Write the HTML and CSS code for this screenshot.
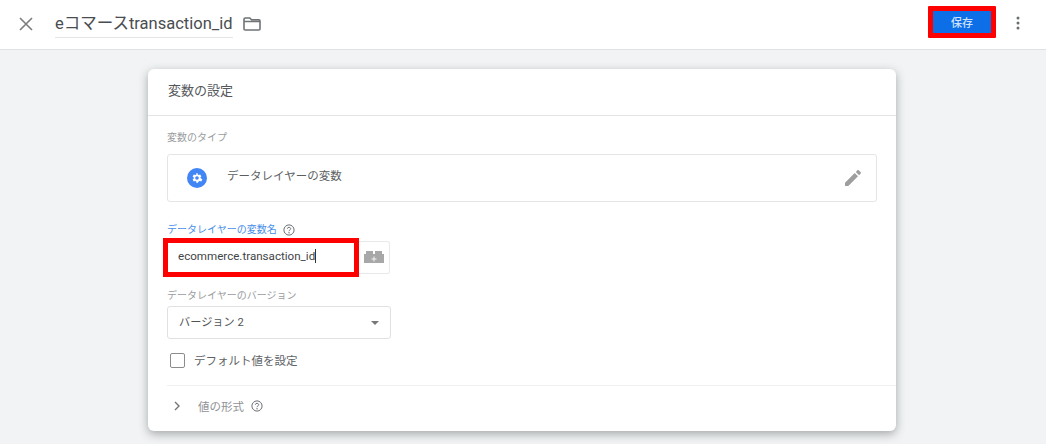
FILE: index.html
```html
<!DOCTYPE html>
<html lang="ja">
<head>
<meta charset="utf-8">
<title>eコマースtransaction_id</title>
<link rel="stylesheet" href="styles.css">
</head>
<body>
<header class="topbar">
  <svg class="close" viewBox="0 0 14 14" width="14" height="14"><path d="M1 1l12 12M13 1L1 13" stroke="#7a7d80" stroke-width="1.6" fill="none"/></svg>
  <div class="name">eコマースtransaction_id</div>
  <svg class="folder" viewBox="0 0 18 14" width="18" height="14"><path d="M1 2.200C1 1.500 1.500 1 2.200 1h4.600l1.700 1.800h7.300c.7 0 1.200.5 1.200 1.200v8c0 .7-.5 1-1.200 1H2.200C1.500 13 1 12.700 1 12z M1 4.500h16" stroke="#6f7376" stroke-width="1.600" fill="none"/></svg>
  <div class="spacer"></div>
  <div class="save-mark"><button class="save">保存</button></div>
  <svg class="more" viewBox="0 0 4 14" width="4" height="14"><circle cx="2" cy="2" r="1.500"/><circle cx="2" cy="7" r="1.500"/><circle cx="2" cy="12" r="1.500"/></svg>
</header>
<main class="stage">
  <section class="card">
    <h1 class="card-title">変数の設定</h1>
    <div class="card-body">
      <div class="label">変数のタイプ</div>
      <div class="type-box">
        <svg class="gear" viewBox="0 0 20 20" width="20" height="20">
          <circle cx="10" cy="10" r="10" fill="#4285f4"/>
          <path fill="#fff" fill-rule="evenodd" d="M14.200 10.600l1.200.9-1.200 2.100-1.400-.6c-.3.300-.7.500-1.100.6L10.500 15H9.500l-.2-1.400c-.4-.1-.8-.3-1.100-.6l-1.400.6-1.200-2.100 1.200-.9v-1.200l-1.200-.9 1.200-2.100 1.400.6c.3-.3.7-.5 1.100-.6L9.500 5h1l.2 1.400c.4.1.8.3 1.100.6l1.400-.6 1.200 2.100-1.200.9zM10 8.200a1.800 1.800 0 1 0 0 3.600 1.800 1.800 0 0 0 0-3.600z"/>
        </svg>
        <span class="type-name">データレイヤーの変数</span>
        <svg class="pencil" viewBox="0 0 16 16" width="16" height="16"><path fill="#9e9e9e" d="M0 12.700V16h3.300l9.700-9.800L9.700 3zM15.700 3.600c.4-.4.400-.9 0-1.300L13.700.3c-.4-.4-.9-.4-1.300 0l-1.600 1.600L14.100 5.200z"/></svg>
      </div>
      <div class="label label-blue">データレイヤーの変数名
        <svg class="help" viewBox="0 0 12 12" width="12" height="12"><circle cx="6" cy="6" r="5.100" fill="none" stroke="#6b6f72"/><path d="M4.300 4.700C4.400 3.800 5.100 3.300 6 3.300c1 0 1.700.6 1.700 1.400 0 1.200-1.700 1.200-1.700 2.500" fill="none" stroke="#6b6f72"/><circle cx="6" cy="8.800" r=".7" fill="#6b6f72"/></svg>
      </div>
      <div class="var-row">
        <div class="var-mark"><div class="var-input">ecommerce.transaction_id<span class="caret"></span></div></div>
        <div class="var-btn">
          <svg viewBox="0 0 20 12" width="20" height="12"><path fill="#a8a8a8" d="M0 3h2V0h7v3h2V0h7v3h2v9H0z"/><path stroke="#f4f4f4" stroke-width="1" d="M7.500 8h5M10 5.500v5"/></svg>
        </div>
      </div>
      <div class="label label-version">データレイヤーのバージョン</div>
      <div class="select"><span>バージョン 2</span><i class="arrow"></i></div>
      <label class="check"><span class="box"></span>デフォルト値を設定</label>
    </div>
    <div class="format">
      <svg class="chevron" viewBox="0 0 6 10" width="6" height="10"><path d="M1 1l4 4-4 4" fill="none" stroke="#757575" stroke-width="1.400"/></svg>
      <span class="format-text">値の形式</span>
      <svg class="help" viewBox="0 0 12 12" width="12" height="12"><circle cx="6" cy="6" r="5.100" fill="none" stroke="#6b6f72"/><path d="M4.300 4.700C4.400 3.800 5.100 3.300 6 3.300c1 0 1.700.6 1.700 1.400 0 1.200-1.700 1.200-1.700 2.500" fill="none" stroke="#6b6f72"/><circle cx="6" cy="8.800" r=".7" fill="#6b6f72"/></svg>
    </div>
  </section>
</main>
</body>
</html>
```
FILE: styles.css
```css
* { box-sizing: border-box; }
html, body { margin: 0; height: 100%; }
body {
  width: 1046px;
  height: 444px;
  overflow: hidden;
  background: #f1f3f4;
  font-family: Roboto, "Noto Sans CJK JP", sans-serif;
  color: #5f6368;
}
.topbar {
  height: 50px;
  background: #fff;
  border-bottom: 1px solid #dfe1e3;
  display: flex;
  align-items: center;
  padding: 0 26px 0 19px;
}
.close { flex: none; margin-right: 22px; margin-bottom: 1px; }
.name {
  font-size: 16.500px;
  line-height: 25px;
  height: 27px;
  width: 178px;
  white-space: nowrap;
  color: #4a4d50;
  border-bottom: 1px solid #e3e5e6;
}
.folder { flex: none; margin-left: 10px; margin-bottom: 1px; }
.spacer { flex: 1; }
.save-mark {
  border: 5px solid #ff0000;
  border-radius: 1px;
  margin: 0 20px 5px 0;
}
.save {
  display: block;
  width: 58px;
  height: 22px;
  border: 0;
  padding: 0;
  background: #0d6fe8;
  color: #cfe2fb;
  font: 500 11px Roboto, "Noto Sans CJK JP", sans-serif;
}
.more { fill: #6b6f72; flex: none; margin-bottom: 3px; }
.stage { padding: 19px 150px 0 148px; }
.card {
  height: 362px;
  background: #fff;
  border-radius: 6px;
  box-shadow: 0 3px 10px rgba(60, 64, 67, .42);
}
.card-title {
  margin: 0;
  height: 47px;
  padding-left: 20px;
  font-size: 13px;
  font-weight: 400;
  line-height: 43px;
  color: #55585b;
  border-bottom: 1px solid #e3e4e6;
}
.card-body { padding: 14px 19px 0 19px; }
.label {
  font-size: 10px;
  line-height: 16px;
  color: #9a9da0;
}
.type-box {
  height: 48px;
  margin-top: 8px;
  border: 1px solid #e4e5e7;
  border-radius: 3px;
  display: flex;
  align-items: center;
  padding: 0 15px 0 19px;
}
.gear { flex: none; }
.type-name { margin-left: 20px; flex: 1; font-size: 11.500px; margin-top: -6px; color: #5c5f62; }
.pencil { flex: none; }
.label-blue {
  margin-top: 20px;
  color: #4a90e8;
  display: flex;
  align-items: center;
  gap: 6px;
}
.help { flex: none; }
.var-row {
  display: flex;
  align-items: center;
  margin: 0 0 0 -4px;
  height: 39px;
}
.var-mark {
  width: 196px;
  height: 39px;
  border: 5px solid #ff0000;
}
.var-input {
  font-size: 11.600px;
  line-height: 27px;
  padding-left: 10px;
  color: #414447;
  white-space: nowrap;
}
.caret {
  display: inline-block;
  width: 1px;
  height: 14px;
  background: #333;
  vertical-align: -3px;
}
.var-btn {
  width: 31px;
  height: 33px;
  border: 1px solid #e8e9ea;
  border-left: 0;
  border-radius: 0 3px 3px 0;
  display: flex;
  align-items: center;
  justify-content: center;
  margin-bottom: 1px;
}
.label-version { margin-top: 11px; }
.select {
  width: 224px;
  height: 33px;
  margin-top: 2px;
  border: 1px solid #dfe1e3;
  border-radius: 3px;
  display: flex;
  align-items: center;
  justify-content: space-between;
  padding: 0 11px 3px;
  font-size: 11.200px;
  color: #515457;
}
.arrow {
  width: 0;
  height: 0;
  margin-top: 3px;
  border-left: 4.500px solid transparent;
  border-right: 4.500px solid transparent;
  border-top: 4.500px solid #777;
}
.check {
  display: flex;
  align-items: center;
  margin: 12px 0 0 3px;
  height: 18px;
  font-size: 11.500px;
  color: #606366;
}
.box {
  width: 15px;
  height: 15px;
  border: 1px solid #8a8d90;
  border-radius: 2px;
  margin-right: 9px;
}
.format {
  margin: 16px 0 0 19px;
  height: 41px;
  border-top: 1px solid #eff0f1;
  display: flex;
  align-items: center;
  padding-left: 7px;
}
.format-text {
  font-size: 11.500px;
  color: #8f9295;
  margin: 0 7px 0 18px;
}
```
